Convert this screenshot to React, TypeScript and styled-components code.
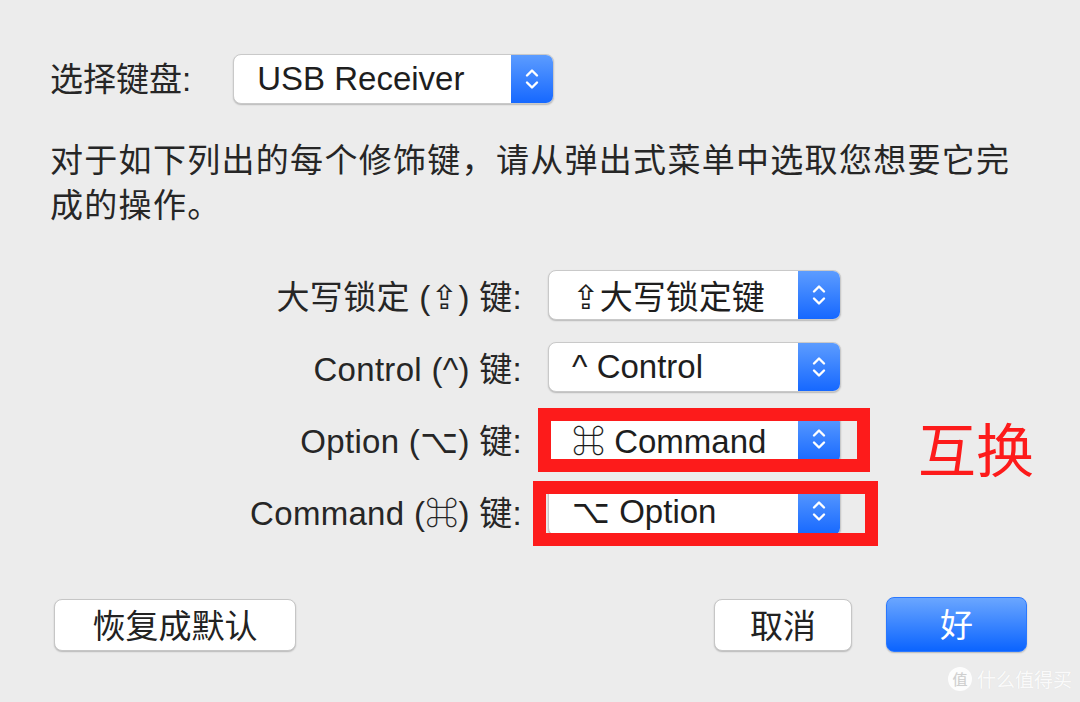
import React from 'react';
import styled, { createGlobalStyle } from 'styled-components';

const GlobalStyle = createGlobalStyle`
  html, body {
    margin: 0;
    padding: 0;
    background: #ececec;
  }
  body {
    font-family: "Liberation Sans", "Noto Sans CJK SC", "DejaVu Sans", sans-serif;
    color: #262626;
    -webkit-font-smoothing: antialiased;
  }
`;

const FONT = `"Liberation Sans", "Noto Sans CJK SC", "DejaVu Sans", sans-serif`;

interface ModifierRow {
  label: string;
  value: string;
  marked?: 'first' | 'second';
}

const rows: ModifierRow[] = [
  { label: '大写锁定 (⇪) 键:', value: '⇪大写锁定键' },
  { label: 'Control (^) 键:', value: '^ Control' },
  { label: 'Option (⌥) 键:', value: '⌘ Command', marked: 'first' },
  { label: 'Command (⌘) 键:', value: '⌥ Option', marked: 'second' },
];

const Chevrons = () => (
  <svg width="18" height="32" viewBox="0 0 18 32" fill="none">
    <path d="M4 12.5 L9 7.5 L14 12.5" stroke="#fff" strokeWidth="2.4" strokeLinecap="round" strokeLinejoin="round" />
    <path d="M4 19.5 L9 24.5 L14 19.5" stroke="#fff" strokeWidth="2.4" strokeLinecap="round" strokeLinejoin="round" />
  </svg>
);

const App: React.FC = () => {
  return (
    <>
      <GlobalStyle />
      <Window>
        <KeyboardRow>
          <Label>选择键盘:</Label>
          <Popup width={321}>
            <PopupText>USB Receiver</PopupText>
            <Stepper>
              <Chevrons />
            </Stepper>
          </Popup>
        </KeyboardRow>

        <Intro>对于如下列出的每个修饰键，请从弹出式菜单中选取您想要它完成的操作。</Intro>

        <ModifierGrid>
          {rows.map((row) => (
            <React.Fragment key={row.label}>
              <RowLabel>{row.label}</RowLabel>
              <PopupCell>
                <Popup width={293}>
                  <PopupText>{row.value}</PopupText>
                  <Stepper>
                    <Chevrons />
                  </Stepper>
                </Popup>
                {row.marked && <Mark variant={row.marked} />}
              </PopupCell>
              {row.marked === 'first' ? <SwapNote>互换</SwapNote> : <span />}
            </React.Fragment>
          ))}
        </ModifierGrid>

        <Footer>
          <Button wide>恢复成默认</Button>
          <Spacer />
          <Button>取消</Button>
          <Button primary>好</Button>
        </Footer>

        <Watermark>
          <WatermarkBadge>值</WatermarkBadge>
          什么值得买
        </Watermark>
      </Window>
    </>
  );
};

const Window = styled.div`
  position: relative;
  width: 1080px;
  height: 702px;
  box-sizing: border-box;
  padding: 54px 53px 0 50px;
  font-family: ${FONT};
  font-size: 33px;
`;

const KeyboardRow = styled.div`
  display: flex;
  align-items: center;
  gap: 42px;
  height: 50px;
`;

const Label = styled.span`
  color: #262626;
  line-height: 1;
`;

const Popup = styled.div<{ width: number }>`
  width: ${(p) => p.width}px;
  height: 50px;
  box-sizing: border-box;
  display: flex;
  align-items: stretch;
  background: #fff;
  border: 1px solid #c9c9c9;
  border-radius: 8px;
  box-shadow: 0 1px 1.5px rgba(0, 0, 0, 0.22);
  overflow: hidden;
`;

const PopupText = styled.span`
  flex: 1;
  display: flex;
  align-items: center;
  padding-left: 23px;
  color: #1e1e1e;
  white-space: nowrap;
`;

const Stepper = styled.div`
  width: 42px;
  display: flex;
  align-items: center;
  justify-content: center;
  background: linear-gradient(#5c9cff, #1668ff);
`;

const Intro = styled.p`
  margin: 34px 0 0;
  width: 975px;
  line-height: 45px;
  letter-spacing: 1.3px;
  color: #262626;
`;

const ModifierGrid = styled.div`
  display: grid;
  grid-template-columns: 472px 293px 1fr;
  column-gap: 26px;
  row-gap: 22px;
  grid-auto-rows: 50px;
  margin-top: 42px;
`;

const RowLabel = styled.span`
  justify-self: end;
  align-self: center;
  white-space: nowrap;
  color: #262626;
  letter-spacing: 0.3px;
`;

const PopupCell = styled.div`
  position: relative;
`;

const Mark = styled.div<{ variant: 'first' | 'second' }>`
  position: absolute;
  box-sizing: border-box;
  border: 13px solid #fd1b1b;
  left: ${(p) => (p.variant === 'first' ? -10 : -15)}px;
  top: ${(p) => (p.variant === 'first' ? -6 : -5)}px;
  width: ${(p) => (p.variant === 'first' ? 332 : 345)}px;
  height: ${(p) => (p.variant === 'first' ? 64 : 65)}px;
`;

const SwapNote = styled.span`
  align-self: center;
  margin-left: 51px;
  margin-top: 16px;
  font-family: "Noto Sans CJK SC", sans-serif;
  font-size: 58px;
  line-height: 1;
  color: #fd1b1b;
  white-space: nowrap;
`;

const Footer = styled.div`
  display: flex;
  align-items: center;
  gap: 34px;
  margin-top: 61px;
  padding-left: 4px;
`;

const Spacer = styled.div`
  flex: 1;
`;

const Button = styled.button<{ primary?: boolean; wide?: boolean }>`
  height: ${(p) => (p.primary ? 55 : 52)}px;
  width: ${(p) => (p.wide ? 242 : p.primary ? 141 : 138)}px;
  box-sizing: border-box;
  font-family: ${FONT};
  font-size: 33px;
  border-radius: 8px;
  padding: 0 0 3px;
  cursor: pointer;
  color: ${(p) => (p.primary ? '#fff' : '#222')};
  border: 1px solid ${(p) => (p.primary ? '#2a78ff' : '#c6c6c6')};
  background: ${(p) => (p.primary ? 'linear-gradient(#6aa6ff, #0b64ff)' : '#fff')};
  box-shadow: 0 1px 1.5px rgba(0, 0, 0, 0.22);
`;

const Watermark = styled.div`
  position: absolute;
  right: 8px;
  bottom: 10px;
  display: flex;
  align-items: center;
  gap: 5px;
  font-family: "Noto Sans CJK SC", sans-serif;
  font-size: 19px;
  color: rgba(255, 255, 255, 0.9);
  text-shadow: 0 0 1px rgba(0, 0, 0, 0.08);
`;

const WatermarkBadge = styled.span`
  width: 24px;
  height: 24px;
  border-radius: 50%;
  background: rgba(255, 255, 255, 0.9);
  color: #cfcfcf;
  font-size: 15px;
  display: flex;
  align-items: center;
  justify-content: center;
`;

export default App;
